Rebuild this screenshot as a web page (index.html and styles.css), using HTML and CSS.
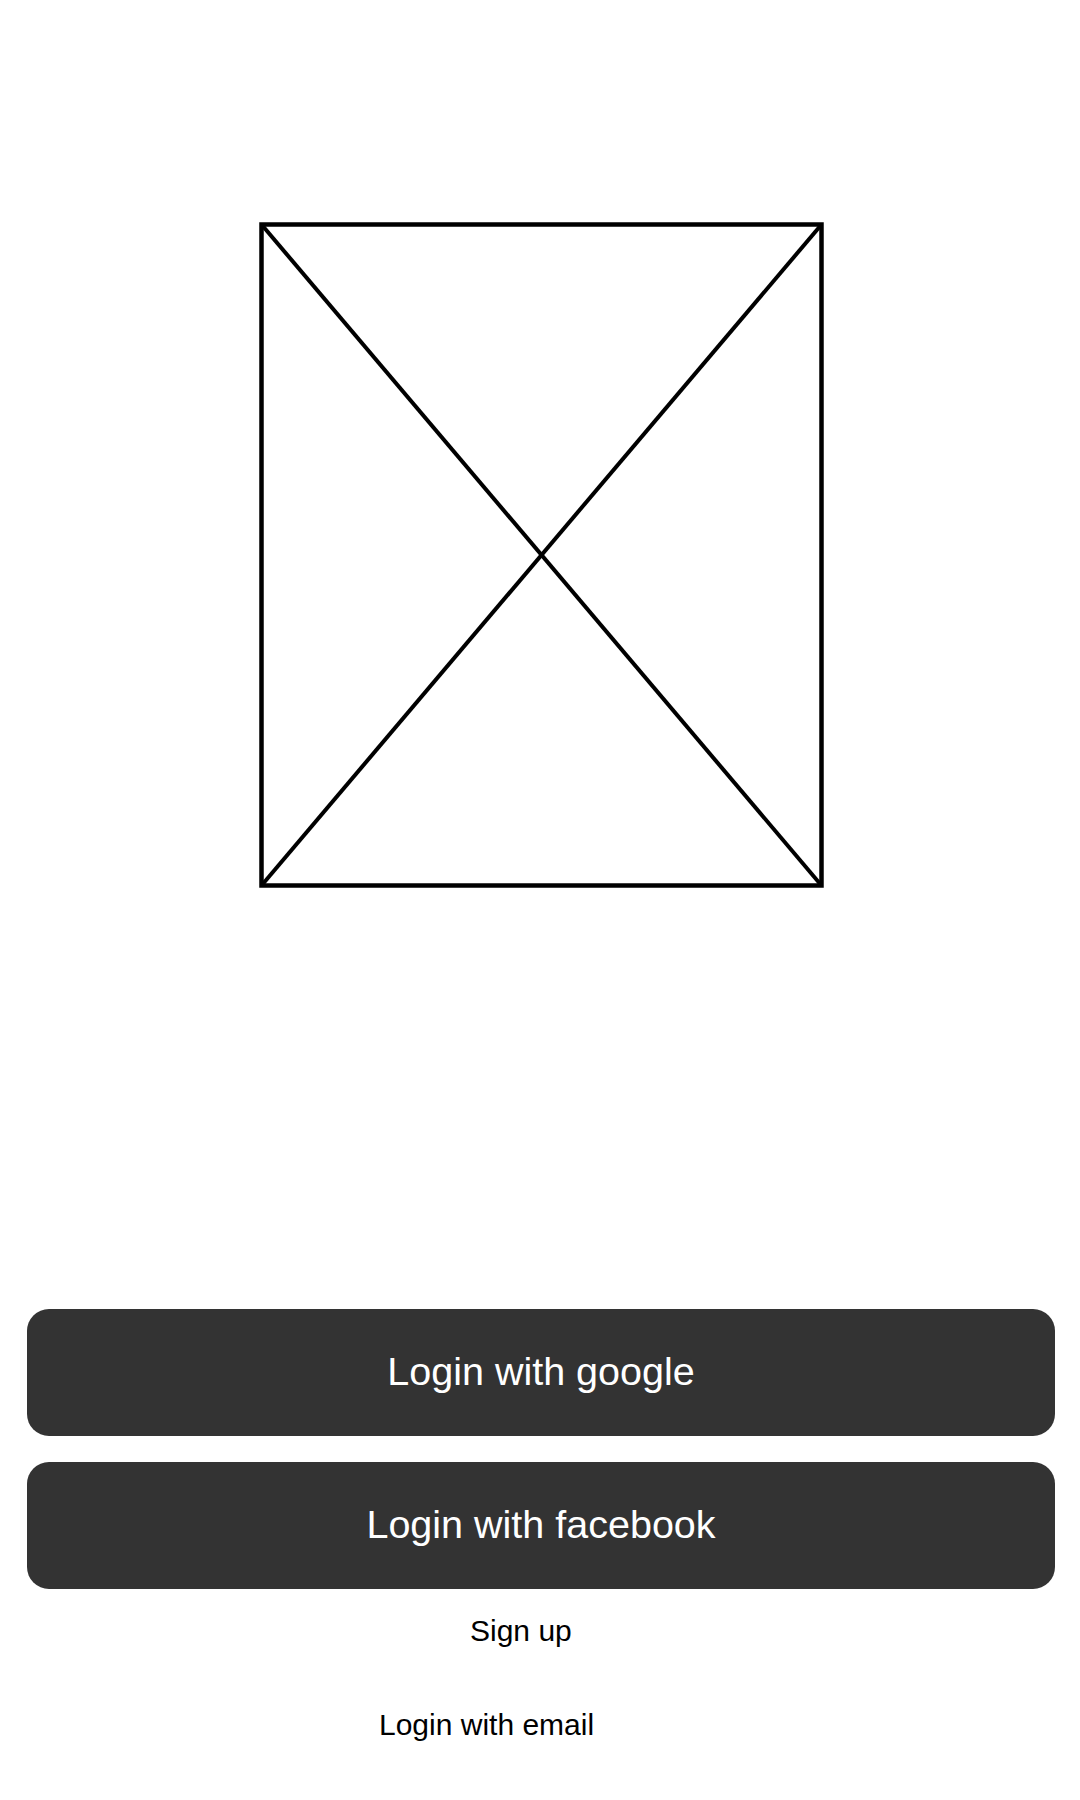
FILE: index.html
```html
<!DOCTYPE html>
<html lang="en">
<head>
<meta charset="utf-8">
<title>Login</title>
<link rel="stylesheet" href="styles.css">
</head>
<body>
<main class="screen">
  <div class="hero">
    <svg class="placeholder" width="565" height="666" viewBox="0 0 565 666" aria-hidden="true">
      <rect x="2.5" y="2.5" width="560" height="661" fill="none" stroke="#000" stroke-width="4.5"/>
      <line x1="2.5" y1="2.5" x2="562.5" y2="663.5" stroke="#000" stroke-width="4"/>
      <line x1="562.5" y1="2.5" x2="2.5" y2="663.5" stroke="#000" stroke-width="4"/>
    </svg>
  </div>
  <div class="actions">
    <button class="btn">Login with google</button>
    <button class="btn">Login with facebook</button>
  </div>
  <a class="link link-signup">Sign up</a>
  <a class="link link-email">Login with email</a>
</main>
</body>
</html>
```
FILE: styles.css
```css
html, body {
  margin: 0;
  padding: 0;
  background: #ffffff;
}

.screen {
  width: 1080px;
  min-height: 1800px;
  display: flex;
  flex-direction: column;
  font-family: "Liberation Sans", Arial, sans-serif;
}

.hero {
  padding-top: 222px;
  display: flex;
  justify-content: center;
  padding-left: 2px;
}

.placeholder {
  display: block;
}

.actions {
  margin-top: 421px;
  padding: 0 25px 0 27px;
  display: flex;
  flex-direction: column;
  gap: 26px;
}

.btn {
  display: block;
  width: 100%;
  height: 127px;
  border: none;
  border-radius: 22px;
  background: #333333;
  color: #ffffff;
  font-family: "Liberation Sans", Arial, sans-serif;
  font-size: 39.5px;
  line-height: 46px;
  padding: 0 0 3px 0;
  text-align: center;
}

.link {
  display: block;
  font-size: 30px;
  line-height: 34px;
  color: #000000;
  text-decoration: none;
}

.link-signup {
  margin-top: 25px;
  margin-left: 470px;
}

.link-email {
  margin-top: 60px;
  margin-left: 379px;
}
```
